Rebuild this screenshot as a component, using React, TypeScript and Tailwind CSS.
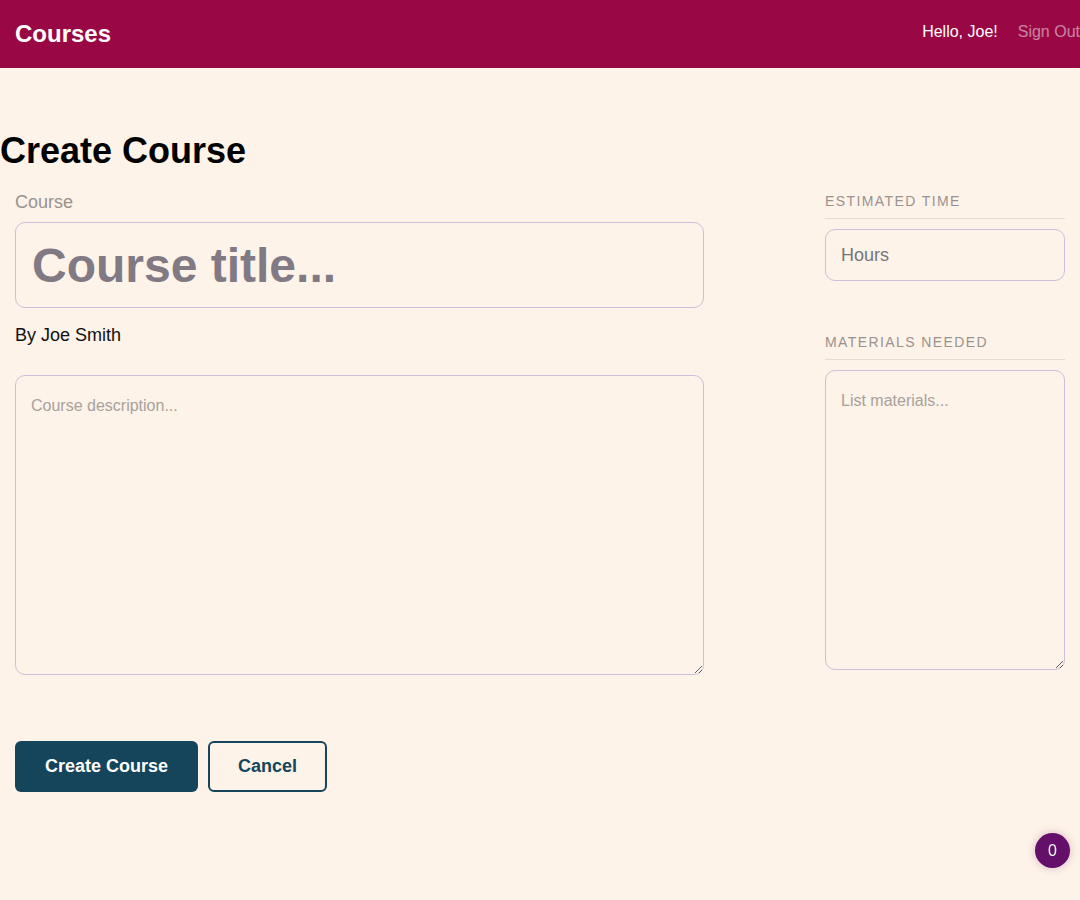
const Header = () => {
  return (
    <header className="flex h-[68px] items-center justify-between overflow-hidden bg-[#990845] pl-[15px]">
      <h1 className="text-[24px] font-bold leading-[28px] text-white">Courses</h1>
      <nav className="flex items-center gap-[20px] pb-[5px] text-[16px] leading-[18px] whitespace-nowrap">
        <span className="text-white">Hello, Joe!</span>
        <a href="#" className="text-white/50">Sign Out</a>
      </nav>
    </header>
  );
};

const SideField = ({ label, children }: { label: string; children: React.ReactNode }) => (
  <div>
    <h3 className="border-b border-[#e6dbd6] pt-[1px] pb-[9px] text-[14px] leading-[16px] tracking-[1.4px] text-[#9a928f]">
      {label}
    </h3>
    <div className="mt-[10px]">{children}</div>
  </div>
);

export default function App() {
  return (
    <div className="min-h-screen bg-[#fdf3e8] font-['Liberation_Sans',Arial,sans-serif] text-black">
      <Header />
      <main>
        <h2 className="mt-[62px] text-[36px] font-bold leading-[41px]">Create Course</h2>
        <form className="mt-[20px] px-[15px]" onSubmit={(e) => e.preventDefault()}>
          <div className="flex justify-between">
            <div className="w-[689px]">
              <label className="block pt-[1px] text-[18px] leading-[21px] text-[#9a928f]">Course</label>
              <input
                type="text"
                placeholder="Course title..."
                className="mt-[9px] block h-[86px] w-full rounded-[10px] border border-[#cdbfd9] bg-transparent px-[16px] text-[48px] font-bold outline-none placeholder:text-[#817a85]"
              />
              <p className="mt-[17px] text-[18px] leading-[21px] text-[#111]">By Joe Smith</p>
              <textarea
                placeholder="Course description..."
                className="mt-[29px] block h-[300px] w-full rounded-[10px] border border-[#cdbfd9] bg-transparent px-[15px] pt-[18px] text-[16px] leading-normal outline-none placeholder:text-[#a9a19c]"
              />
            </div>
            <div className="mt-[1px] w-[240px]">
              <SideField label="ESTIMATED TIME">
                <input
                  type="text"
                  placeholder="Hours"
                  className="block h-[52px] w-full rounded-[10px] border border-[#cdbfd9] bg-transparent px-[15px] pt-[1px] text-[18px] outline-none placeholder:text-[#77757a]"
                />
              </SideField>
              <div className="mt-[52px]">
                <SideField label="MATERIALS NEEDED">
                  <textarea
                    placeholder="List materials..."
                    className="block h-[300px] w-full rounded-[10px] border border-[#cdbfd9] bg-transparent px-[15px] pt-[18px] text-[16px] leading-normal outline-none placeholder:text-[#a9a19c]"
                  />
                </SideField>
              </div>
            </div>
          </div>
          <div className="mt-[66px] flex gap-[10px]">
            <button
              type="submit"
              className="h-[51px] rounded-[6px] bg-[#14455a] px-[30px] text-[18px] font-bold text-white"
            >
              Create Course
            </button>
            <button
              type="button"
              className="h-[51px] rounded-[6px] border-2 border-[#14455a] px-[28px] text-[18px] font-bold text-[#14455a]"
            >
              Cancel
            </button>
          </div>
        </form>
      </main>
      <div className="fixed right-[10px] bottom-[32px] flex h-[35px] w-[35px] items-center justify-center rounded-full bg-[#64106a] text-[16px] text-white shadow-[0_0_8px_rgba(100,16,106,0.25)]">
        0
      </div>
    </div>
  );
}
